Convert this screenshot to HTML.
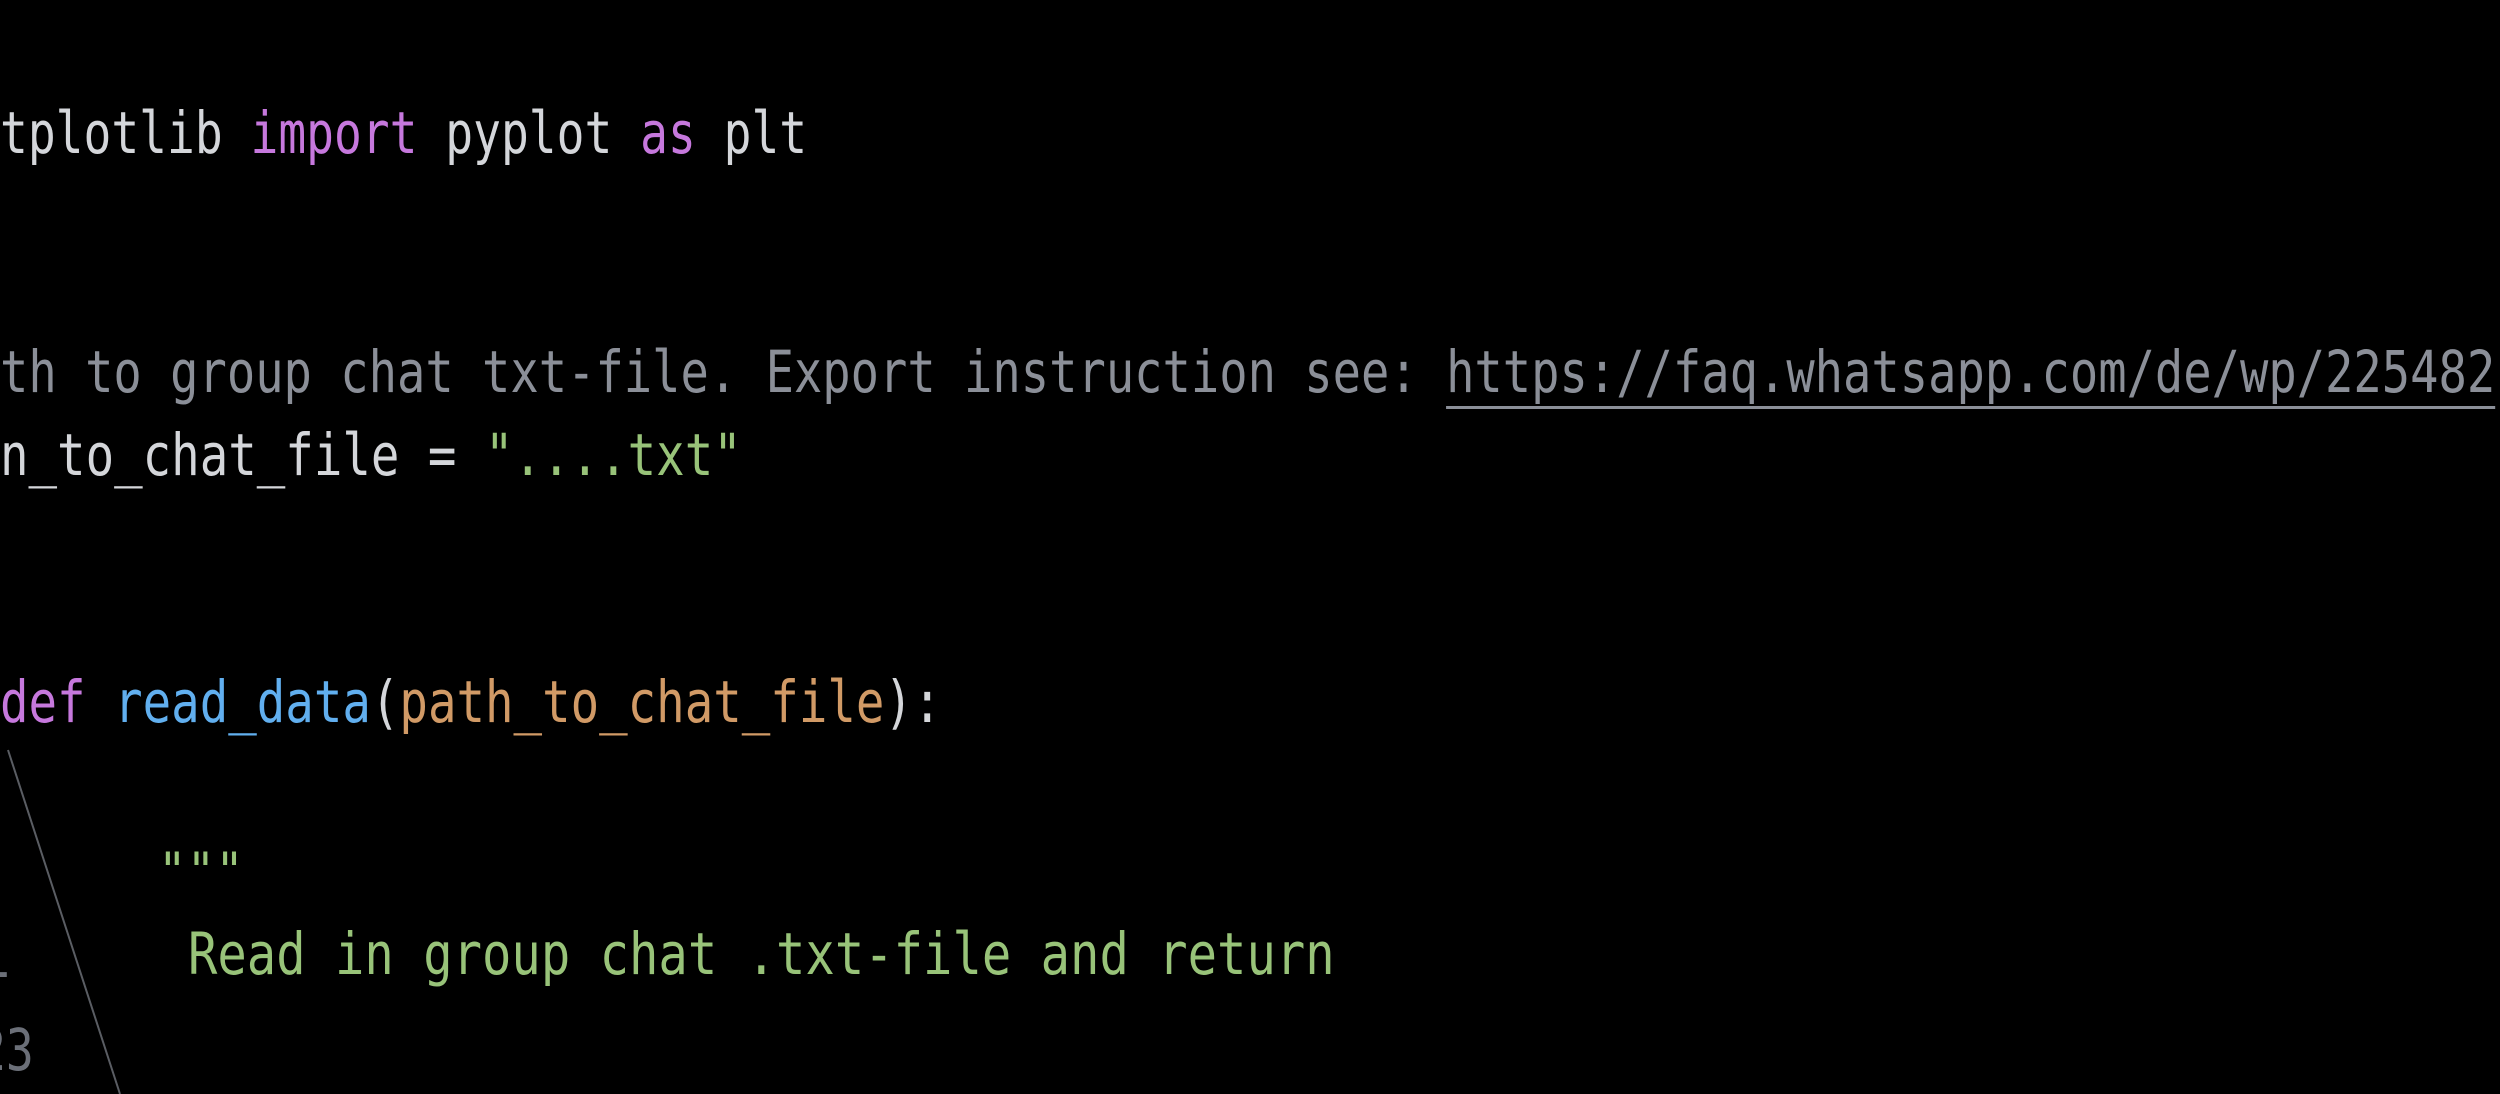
<!DOCTYPE html>
<html><head><meta charset="utf-8"><style>
html,body{margin:0;padding:0;background:#000;width:2500px;height:1094px;overflow:hidden}
.l{position:absolute;left:0;white-space:pre;font-family:"DejaVu Sans Mono","Liberation Mono",monospace;font-size:58px;line-height:1;color:#d4d6da;transform-origin:0 100%}
.k{color:#c678dd}.c{color:#8b8f98}.s{color:#98c379}.f{color:#61afef}.p{color:#d19a66}
.u{text-decoration:underline;text-decoration-thickness:3px;text-underline-offset:14px}
</style></head><body>
<div class="l" style="top:104px;transform:scaleX(0.797)">tplotlib <span class="k">import</span> pyplot <span class="k">as</span> plt</div>
<div class="l c" style="top:343px;transform:scaleX(0.812)">th to group chat txt-file. Export instruction see: <span class="u">https://faq.whatsapp.com/de/wp/225482</span></div>
<div class="l" style="top:426px;transform:scaleX(0.817)">n_to_chat_file = <span class="s">"....txt"</span></div>
<div class="l" style="top:673px;transform:scaleX(0.817)"><span class="k">def</span> <span class="f">read_data</span>(<span class="p">path_to_chat_file</span>):</div>
<div class="l s" style="top:846px;left:158px;font-size:50px;transform:scaleX(0.95)">"""</div>
<div class="l s" style="top:925px;left:188px;transform:scaleX(0.842)">Read in group chat .txt-file and return</div>
<div class="l" style="top:1021px;left:-22px;color:#6b6f78;transform:scaleX(0.8)">23</div>
<div class="l" style="top:928px;left:-18px;color:#6b6f78;transform:scaleX(0.8)">1</div>
<svg style="position:absolute;left:0;top:0" width="2500" height="1094"><line x1="8" y1="750" x2="120" y2="1094" stroke="#5a5d63" stroke-width="2"/></svg>
</body></html>
